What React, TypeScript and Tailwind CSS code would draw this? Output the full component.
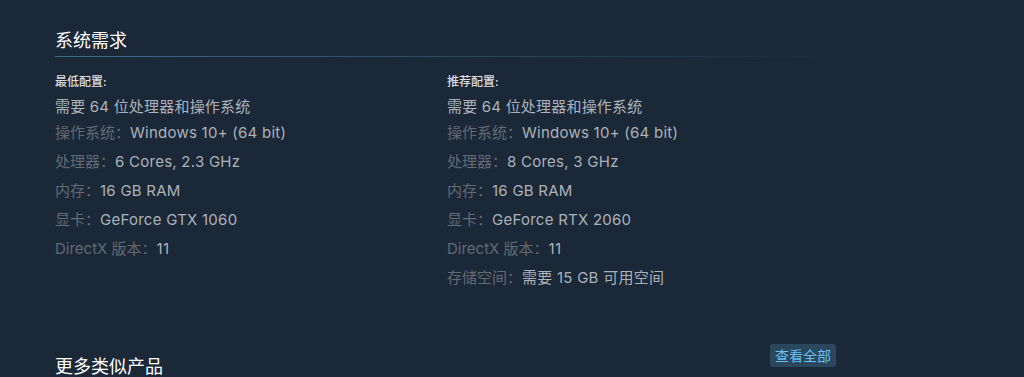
import React from "react";

type Row = { label: string; value: string };

const minRows: Row[] = [
  { label: "操作系统：", value: "Windows 10+ (64 bit)" },
  { label: "处理器：", value: "6 Cores, 2.3 GHz" },
  { label: "内存：", value: "16 GB RAM" },
  { label: "显卡：", value: "GeForce GTX 1060" },
  { label: "DirectX 版本：", value: "11" },
];

const recRows: Row[] = [
  { label: "操作系统：", value: "Windows 10+ (64 bit)" },
  { label: "处理器：", value: "8 Cores, 3 GHz" },
  { label: "内存：", value: "16 GB RAM" },
  { label: "显卡：", value: "GeForce RTX 2060" },
  { label: "DirectX 版本：", value: "11" },
  { label: "存储空间：", value: "需要 15 GB 可用空间" },
];

function Column({ title, rows }: { title: string; rows: Row[] }) {
  return (
    <div className="flex flex-col">
      <div className="text-[12px] leading-[16px] text-[#dcdedf] font-medium">{title}</div>
      <div className="mt-[8px] text-[15px] leading-[18px] text-[#acb2b8] whitespace-pre tracking-[0.2px]">需要 64 位处理器和操作系统</div>
      <ul className="mt-[8px] flex flex-col gap-[11px]">
        {rows.map((r, i) => (
          <li key={i} className="text-[15px] leading-[18px] whitespace-nowrap">
            <span className="text-[#626a73]">{r.label}</span>
            <span className="text-[#acb2b8] tracking-[0.25px]">{r.value}</span>
          </li>
        ))}
      </ul>
    </div>
  );
}

export default function App() {
  return (
    <div
      className="w-[1024px] h-[377px] overflow-hidden bg-[#1b2838]"
      style={{ fontFamily: 'Inter, "Noto Sans CJK SC", sans-serif' }}
    >
      <div className="ml-[55px] w-[784px] pt-[29px]">
        <div className="text-[18px] leading-[24px] text-[#ffffff]">系统需求</div>
        <div className="mt-[3px] h-px w-[784px] bg-gradient-to-r from-[#3b6e8c] to-[#3b6e8c00]" />
        <div className="mt-[17px] grid grid-cols-2">
          <Column title="最低配置:" rows={minRows} />
          <Column title="推荐配置:" rows={recRows} />
        </div>
        <div className="mt-[57px] flex items-end justify-between">
          <div className="text-[18px] leading-[24px] text-[#ffffff] mb-[-12px]">更多类似产品</div>
          <div className="mr-[3px] h-[23px] px-[5px] rounded-[2px] bg-[#67c1f5]/20 text-[#66c0f4] text-[14px] leading-[23px]">
            查看全部
          </div>
        </div>
      </div>
    </div>
  );
}
